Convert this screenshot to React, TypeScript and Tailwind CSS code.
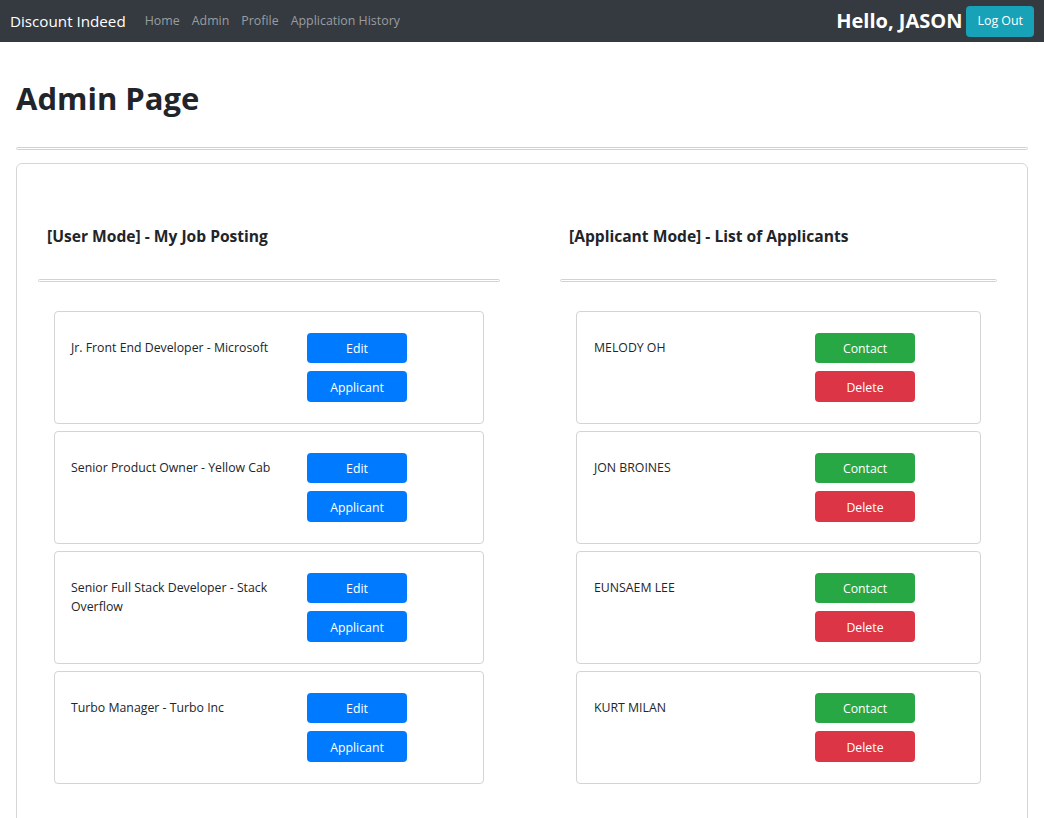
import React from 'react';

const jobs = [
  'Jr. Front End Developer - Microsoft',
  'Senior Product Owner - Yellow Cab',
  'Senior Full Stack Developer - Stack Overflow',
  'Turbo Manager - Turbo Inc',
];

const applicants = ['MELODY OH', 'JON BROINES', 'EUNSAEM LEE', 'KURT MILAN'];

function Rule() {
  return <div className="h-[3px] border border-[#d2d2d2] rounded-[2px]" />;
}

function Btn({ label, color }: { label: string; color: string }) {
  return (
    <button
      className={`w-[100px] pt-[2px] rounded-[4px] text-white text-[12.3px] leading-[16px] flex items-center justify-center ${color}`}
    >
      {label}
    </button>
  );
}

export default function App() {
  return (
    <div className="min-h-screen bg-white text-[#212529]" style={{ fontFamily: '"Open Sans", "Noto Sans", sans-serif' }}>
      {/* top bar */}
      <nav className="h-[42px] bg-[#343a40] flex items-center pl-[10px] pr-[10px]">
        <span className="text-white text-[15.2px]">Discount Indeed</span>
        <div className="flex items-center gap-[12px] ml-[19px] text-[12.4px] text-[#9a9da0]">
          <a>Home</a>
          <a>Admin</a>
          <a>Profile</a>
          <a>Application History</a>
        </div>
        <div className="ml-auto flex items-center gap-[4px]">
          <span className="text-white text-[20px] font-bold">Hello, JASON</span>
          <button className="h-[31px] px-[11px] rounded-[4px] bg-[#17a2b8] text-white text-[12.4px]">
            Log Out
          </button>
        </div>
      </nav>

      <main className="px-[16px]">
        <h1 className="mt-[38px] text-[31px] leading-[37px] font-bold">Admin Page</h1>
        <div className="mt-[30px]">
          <Rule />
        </div>

        <div className="mt-[13px] border border-[#d6d6d6] rounded-[6px] pb-[40px]">
          <div className="flex pl-[21px]">
            {/* user mode */}
            <section className="w-[462px]">
              <h2 className="mt-[62px] px-[9px] text-[15.6px] leading-[20px] font-bold">
                [User Mode] - My Job Posting
              </h2>
              <div className="mt-[33px]">
                <Rule />
              </div>
              <div className="mt-[29px] px-[16px] flex flex-col gap-[7px]">
                {jobs.map((job) => (
                  <div key={job} className="border border-[#d4d4d4] rounded-[4px] py-[21px] pl-[16px] flex">
                    <p className="w-[236px] pr-[12px] mt-[5px] text-[12.3px] leading-[19px]">{job}</p>
                    <div className="flex flex-col gap-[8px]">
                      <Btn label="Edit" color="bg-[#007bff] h-[30px]" />
                      <Btn label="Applicant" color="bg-[#007bff] h-[31px]" />
                    </div>
                  </div>
                ))}
              </div>
            </section>

            {/* applicant mode */}
            <section className="w-[437px] ml-[60px]">
              <h2 className="mt-[62px] px-[9px] text-[15.6px] leading-[20px] font-bold">
                [Applicant Mode] - List of Applicants
              </h2>
              <div className="mt-[33px]">
                <Rule />
              </div>
              <div className="mt-[29px] px-[16px] flex flex-col gap-[7px]">
                {applicants.map((name) => (
                  <div key={name} className="border border-[#d4d4d4] rounded-[4px] py-[21px] pl-[17px] flex">
                    <p className="w-[221px] mt-[5px] text-[12.3px] leading-[19px]">{name}</p>
                    <div className="flex flex-col gap-[8px]">
                      <Btn label="Contact" color="bg-[#28a745] h-[30px]" />
                      <Btn label="Delete" color="bg-[#dc3545] h-[31px]" />
                    </div>
                  </div>
                ))}
              </div>
            </section>
          </div>
        </div>
      </main>
    </div>
  );
}
